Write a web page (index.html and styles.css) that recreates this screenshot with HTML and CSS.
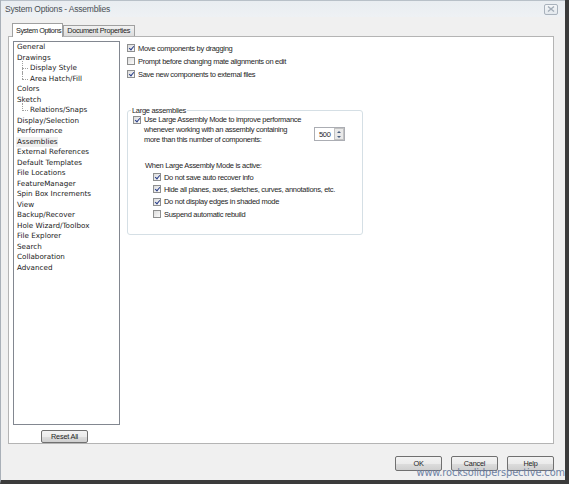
FILE: index.html
```html
<!DOCTYPE html>
<html lang="en">
  <head>
    <meta charset="UTF-8" />
    <title>System Options - Assemblies</title>
    <link rel="stylesheet" href="styles.css">
  </head>
  <body>
    <div class="window">
      <!-- title bar -->
      <div class="titlebar">
        <span class="title">System Options - Assemblies</span>
        <span class="close-btn">
          <svg width="8" height="6" viewBox="0 0 8 6"><path d="M1 0.5 L7 5.5 M7 0.5 L1 5.5" stroke="#a3adb8" stroke-width="1.4" fill="none"/></svg>
        </span>
      </div>

      <!-- tabs -->
      <div class="tabs">
        <div class="tab active">System Options</div>
        <div class="tab">Document Properties</div>
      </div>

      <div class="panel">
        <div class="side">
          <ul class="tree">
            <li>General</li>
            <li>Drawings</li>
            <li class="child">Display Style</li>
            <li class="child last">Area Hatch/Fill</li>
            <li>Colors</li>
            <li>Sketch</li>
            <li class="child last">Relations/Snaps</li>
            <li>Display/Selection</li>
            <li>Performance</li>
            <li class="selected">Assemblies</li>
            <li>External References</li>
            <li>Default Templates</li>
            <li>File Locations</li>
            <li>FeatureManager</li>
            <li>Spin Box Increments</li>
            <li>View</li>
            <li>Backup/Recover</li>
            <li>Hole Wizard/Toolbox</li>
            <li>File Explorer</li>
            <li>Search</li>
            <li>Collaboration</li>
            <li>Advanced</li>
          </ul>
          <button class="btn reset">Reset All</button>
        </div>

        <div class="options">
          <div class="checks">
            <label class="check"><span class="box checked"></span>Move components by dragging</label>
            <label class="check"><span class="box"></span>Prompt before changing mate alignments on edit</label>
            <label class="check"><span class="box checked"></span>Save new components to external files</label>
          </div>

          <fieldset class="group">
            <legend>Large assemblies</legend>
            <div class="lam-row">
              <span class="box checked"></span>
              <span class="lam-text">Use Large Assembly Mode to improve performance<br>whenever working with an assembly containing<br>more than this number of components:</span>
              <span class="spin">
                <span class="spin-value">500</span>
                <span class="spin-arrows">
                  <span class="arrow up"></span>
                  <span class="arrow down"></span>
                </span>
              </span>
            </div>

            <div class="sub-title">When Large Assembly Mode is active:</div>
            <div class="sub-checks">
              <label class="check"><span class="box checked"></span>Do not save auto recover info</label>
              <label class="check"><span class="box checked"></span>Hide all planes, axes, sketches, curves, annotations, etc.</label>
              <label class="check"><span class="box checked"></span>Do not display edges in shaded mode</label>
              <label class="check"><span class="box"></span>Suspend automatic rebuild</label>
            </div>
          </fieldset>
        </div>
      </div>

      <div class="footer">
        <button class="btn">OK</button>
        <button class="btn">Cancel</button>
        <button class="btn">Help</button>
      </div>

      <div class="watermark">www.rocksolidperspective.com</div>
    </div>
  </body>
</html>
```

FILE: styles.css
```css
* {
  box-sizing: border-box;
}

body {
  margin: 0;
  background: #ffffff;
  font-family: "Liberation Sans", Arial, sans-serif;
  font-size: 7.5px;
  letter-spacing: -0.3px;
  color: #1e1e1e;
}

.window {
  position: relative;
  width: 569px;
  height: 484px;
  background: #f0f0f0;
  border-left: 1px solid #a9b0b8;
  border-right: 4px solid #3b3b3b;
  border-bottom: 4px solid #3b3b3b;
  display: flex;
  flex-direction: column;
}

/* タイトルバー */
.titlebar {
  height: 17px;
  display: flex;
  align-items: center;
  justify-content: space-between;
  padding: 0 7px 0 4px;
  background: linear-gradient(#e9edf1, #eef1f4);
  border-top: 1px solid #b8c0c8;
}

.title {
  color: #4a4f55;
  font-size: 8.5px;
  letter-spacing: -0.2px;
}

.close-btn {
  width: 14px;
  height: 11px;
  border: 1px solid #a9b2bc;
  border-radius: 2px;
  background: linear-gradient(#f4f6f8, #e3e8ed);
  display: flex;
  align-items: center;
  justify-content: center;
}

/* タブ */
.tabs {
  display: flex;
  align-items: flex-end;
  height: 19px;
  padding: 5px 0 0 11px;
}

.tab {
  height: 11px;
  padding: 0 4px 0 3px;
  font-size: 7.3px;
  line-height: 10px;
  white-space: nowrap;
  border: 1px solid #a0a0a0;
  border-bottom: none;
  background: linear-gradient(#f2f2f2, #dcdcdc);
  color: #222;
}

.tab.active {
  height: 14px;
  padding: 0 1px 0 3px;
  letter-spacing: -0.45px;
  line-height: 13px;
  background: #ffffff;
  margin-bottom: -1px;
  position: relative;
  z-index: 1;
}

.panel {
  margin: 0 11px 0 7px;
  height: 408px;
  background: #ffffff;
  border: 1px solid #b4b4b4;
  display: flex;
  padding: 4px 4px 0 4px;
  gap: 7px;
}

/* 左のツリー */
.side {
  display: flex;
  flex-direction: column;
  align-items: center;
  gap: 5px;
  width: 107px;
  flex: none;
}

.tree {
  list-style: none;
  margin: 0;
  padding: 0 0 0 2px;
  width: 107px;
  height: 385px;
  border: 1px solid #828790;
  font-family: "DejaVu Sans", sans-serif;
  font-size: 7.2px;
  letter-spacing: 0;
}

.tree li {
  height: 10.5px;
  line-height: 10.5px;
  padding-left: 1px;
  color: #1a1a1a;
  white-space: nowrap;
}

.tree li.child {
  position: relative;
  padding-left: 14px;
}

.tree li.child::before {
  content: "";
  position: absolute;
  left: 6px;
  top: -2px;
  height: 12.5px;
  border-left: 1px dotted #a0a0a0;
}

.tree li.child.last::before {
  height: 7.5px;
}

.tree li.child::after {
  content: "";
  position: absolute;
  left: 6px;
  top: 5px;
  width: 6px;
  border-top: 1px dotted #a0a0a0;
}

.tree li.selected {
  background: #f0f0f0;
  width: 42px;
}

.btn {
  width: 47px;
  height: 13px;
  padding: 0;
  font-family: "Liberation Sans", Arial, sans-serif;
  font-size: 7.3px;
  letter-spacing: -0.2px;
  color: #1e1e1e;
  border: 1px solid #707070;
  border-radius: 2px;
  background: linear-gradient(#f3f3f3 0%, #ebebeb 50%, #dddddd 51%, #cfcfcf 100%);
}

.reset {
  margin-left: -4px;
}

/* 右側のオプション */
.options {
  padding-top: 3px;
  width: 236px;
  flex: none;
}

.checks {
  display: flex;
  flex-direction: column;
  gap: 5px;
}

.check {
  display: flex;
  align-items: center;
  gap: 3px;
  height: 8px;
  white-space: nowrap;
  color: #1e1e1e;
}

.box {
  flex: none;
  width: 8px;
  height: 8px;
  border: 1px solid #8e8f8f;
  background: linear-gradient(135deg, #dcdcdc, #fbfbfb);
  position: relative;
}

.box.checked::after {
  content: "";
  position: absolute;
  left: 2px;
  top: 0px;
  width: 2px;
  height: 4px;
  border-right: 1.3px solid #2a3f8a;
  border-bottom: 1.3px solid #2a3f8a;
  transform: rotate(40deg);
}

.group {
  margin: 28px 0 0 0;
  padding: 1px 6px 0 5px;
  min-width: 0;
  width: 236px;
  height: 129px;
  border: 1px solid #d5dfe5;
  border-radius: 3px;
}

.group legend {
  padding: 0 1px;
  margin-left: -2px;
  color: #1e1e1e;
}

.lam-row {
  display: flex;
  align-items: flex-start;
}

.lam-text {
  margin-left: 3px;
  line-height: 10px;
  white-space: nowrap;
  margin-top: -1px;
}

.spin {
  margin: 11px 11px 0 auto;
  width: 31px;
  height: 14px;
  border: 1px solid #abadb3;
  display: flex;
  align-items: center;
  justify-content: space-between;
  padding-left: 4px;
}

.spin-arrows {
  display: flex;
  flex-direction: column;
  width: 10px;
  height: 12px;
  border: 1px solid #c3c3c3;
  background: #e9e9e9;
}

.arrow {
  flex: 1;
  display: flex;
  align-items: center;
  justify-content: center;
}

.arrow.up::before {
  content: "";
  border: 2px solid transparent;
  border-bottom: 2px solid #4a5f80;
  margin-top: -2px;
}

.arrow.down::before {
  content: "";
  border: 2px solid transparent;
  border-top: 2px solid #4a5f80;
  margin-bottom: -2px;
}

.sub-title {
  margin: 16px 0 0 12px;
}

.sub-checks {
  display: flex;
  flex-direction: column;
  gap: 4.4px;
  margin: 3px 0 0 20px;
}

.footer {
  display: flex;
  justify-content: flex-end;
  gap: 9px;
  padding: 12px 11px 0 0;
}

.footer .btn {
  height: 15px;
}

.watermark {
  position: absolute;
  right: 0;
  bottom: 2px;
  font-family: "DejaVu Sans", sans-serif;
  font-size: 9.8px;
  letter-spacing: -0.1px;
  color: #6d7fa3;
}
```
